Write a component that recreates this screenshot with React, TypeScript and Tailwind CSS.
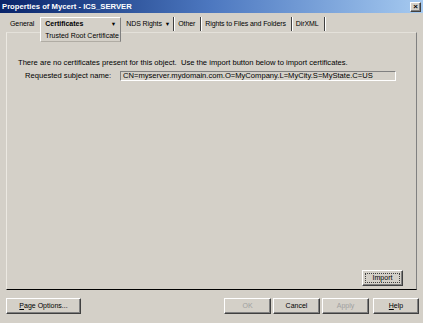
import React from "react";

const btn =
  "flex items-center justify-center border border-t-white border-l-white border-r-[#404040] border-b-[#404040] shadow-[inset_-1px_-1px_0_#808080] bg-[#d4d0c8]";

function Tab({ label, arrow, sep = true }: { label: string; arrow?: boolean; sep?: boolean }) {
  return (
    <div
      className={
        "flex h-[14px] items-center gap-[3px] whitespace-nowrap pl-[4px] " +
        (arrow ? "pr-[3px] " : "pr-[5px] ") +
        (sep ? "border-r border-r-[#404040] shadow-[1px_0_0_#ffffff]" : "")
      }
    >
      <span className="tracking-[-0.1px]">{label}</span>
      {arrow && <span className="text-[5.5px]">▼</span>}
    </div>
  );
}

export default function App() {
  return (
    <div className="flex h-[323px] w-[423px] flex-col overflow-hidden bg-[#d4d0c8] font-['Liberation_Sans',Arial,sans-serif] text-[7px] text-black">
      <div className="flex h-[13px] items-center justify-between bg-gradient-to-r from-[#0a246a] via-[#4d78c0] to-[#a6caf0] pl-[2px] pr-[2px]">
        <span className="text-[7.7px] font-bold text-white">Properties of Mycert - ICS_SERVER</span>
        <div className={btn + " h-[10px] w-[11px] text-[8px] font-bold leading-none"}>×</div>
      </div>

      <div className="flex flex-1 flex-col px-[6px] pt-[4px]">
        <div className="relative z-10 flex items-start">
          <Tab label="General" sep={false} />
          <div className="ml-[1px] mr-[1px] flex w-[81px] flex-col whitespace-nowrap border border-b-[#b0aca4] border-l-white border-r-[#808080] border-t-white bg-[#d4d0c8]">
            <div className="flex h-[13px] items-center justify-between pl-[4px] pr-[4px] font-bold">
              <span>Certificates</span>
              <span className="text-[5.5px] font-normal">▼</span>
            </div>
            <div className="flex h-[10px] items-center px-[4px]">Trusted Root Certificate</div>
          </div>
          <Tab label="NDS Rights" arrow />
          <Tab label="Other" />
          <Tab label="Rights to Files and Folders" />
          <Tab label="DirXML" />
        </div>

        <div className="-mt-[10px] flex flex-1 flex-col border border-b-black border-l-[#ece9e2] border-r-[#808080] border-t-[#e4e1da] px-[11px] pb-[2px] pt-[24px] text-[7.6px]">
          <p className="whitespace-nowrap">
            There are no certificates present for this object.&nbsp; Use the import button below to import certificates.
          </p>
          <div className="mt-[2px] flex items-center pl-[7px]">
            <span className="w-[95px] whitespace-nowrap">Requested subject name:</span>
            <div className="flex h-[10px] w-[276px] items-center whitespace-nowrap border border-b-white border-l-[#808080] border-r-white border-t-[#808080] bg-[#d4d0c8] px-[2px]">
              CN=myserver.mydomain.com.O=MyCompany.L=MyCity.S=MyState.C=US
            </div>
          </div>
          <div className="flex flex-1 items-end justify-end pb-[1px] pr-[2px]">
            <div className={btn + " h-[16px] w-[41px] text-[7px] outline-1 outline-offset-[-4px] outline-dotted outline-[#404040]"}>Import</div>
          </div>
        </div>

        <div className="-mr-[2px] flex h-[33px] items-center justify-between pb-[1px]">
          <div className={btn + " h-[16px] w-[75px]"}>
            <span>
              <u>P</u>age Options...
            </span>
          </div>
          <div className="flex gap-[2px]">
            <div className={btn + " h-[16px] w-[47px] text-[#a0a0a0]"}>OK</div>
            <div className={btn + " h-[16px] w-[47px]"}>Cancel</div>
            <div className={btn + " h-[16px] w-[47px] text-[#a0a0a0]"}>Apply</div>
            <div className={btn + " ml-[2px] h-[16px] w-[46px]"}>
              <span>
                <u>H</u>elp
              </span>
            </div>
          </div>
        </div>
      </div>
    </div>
  );
}
